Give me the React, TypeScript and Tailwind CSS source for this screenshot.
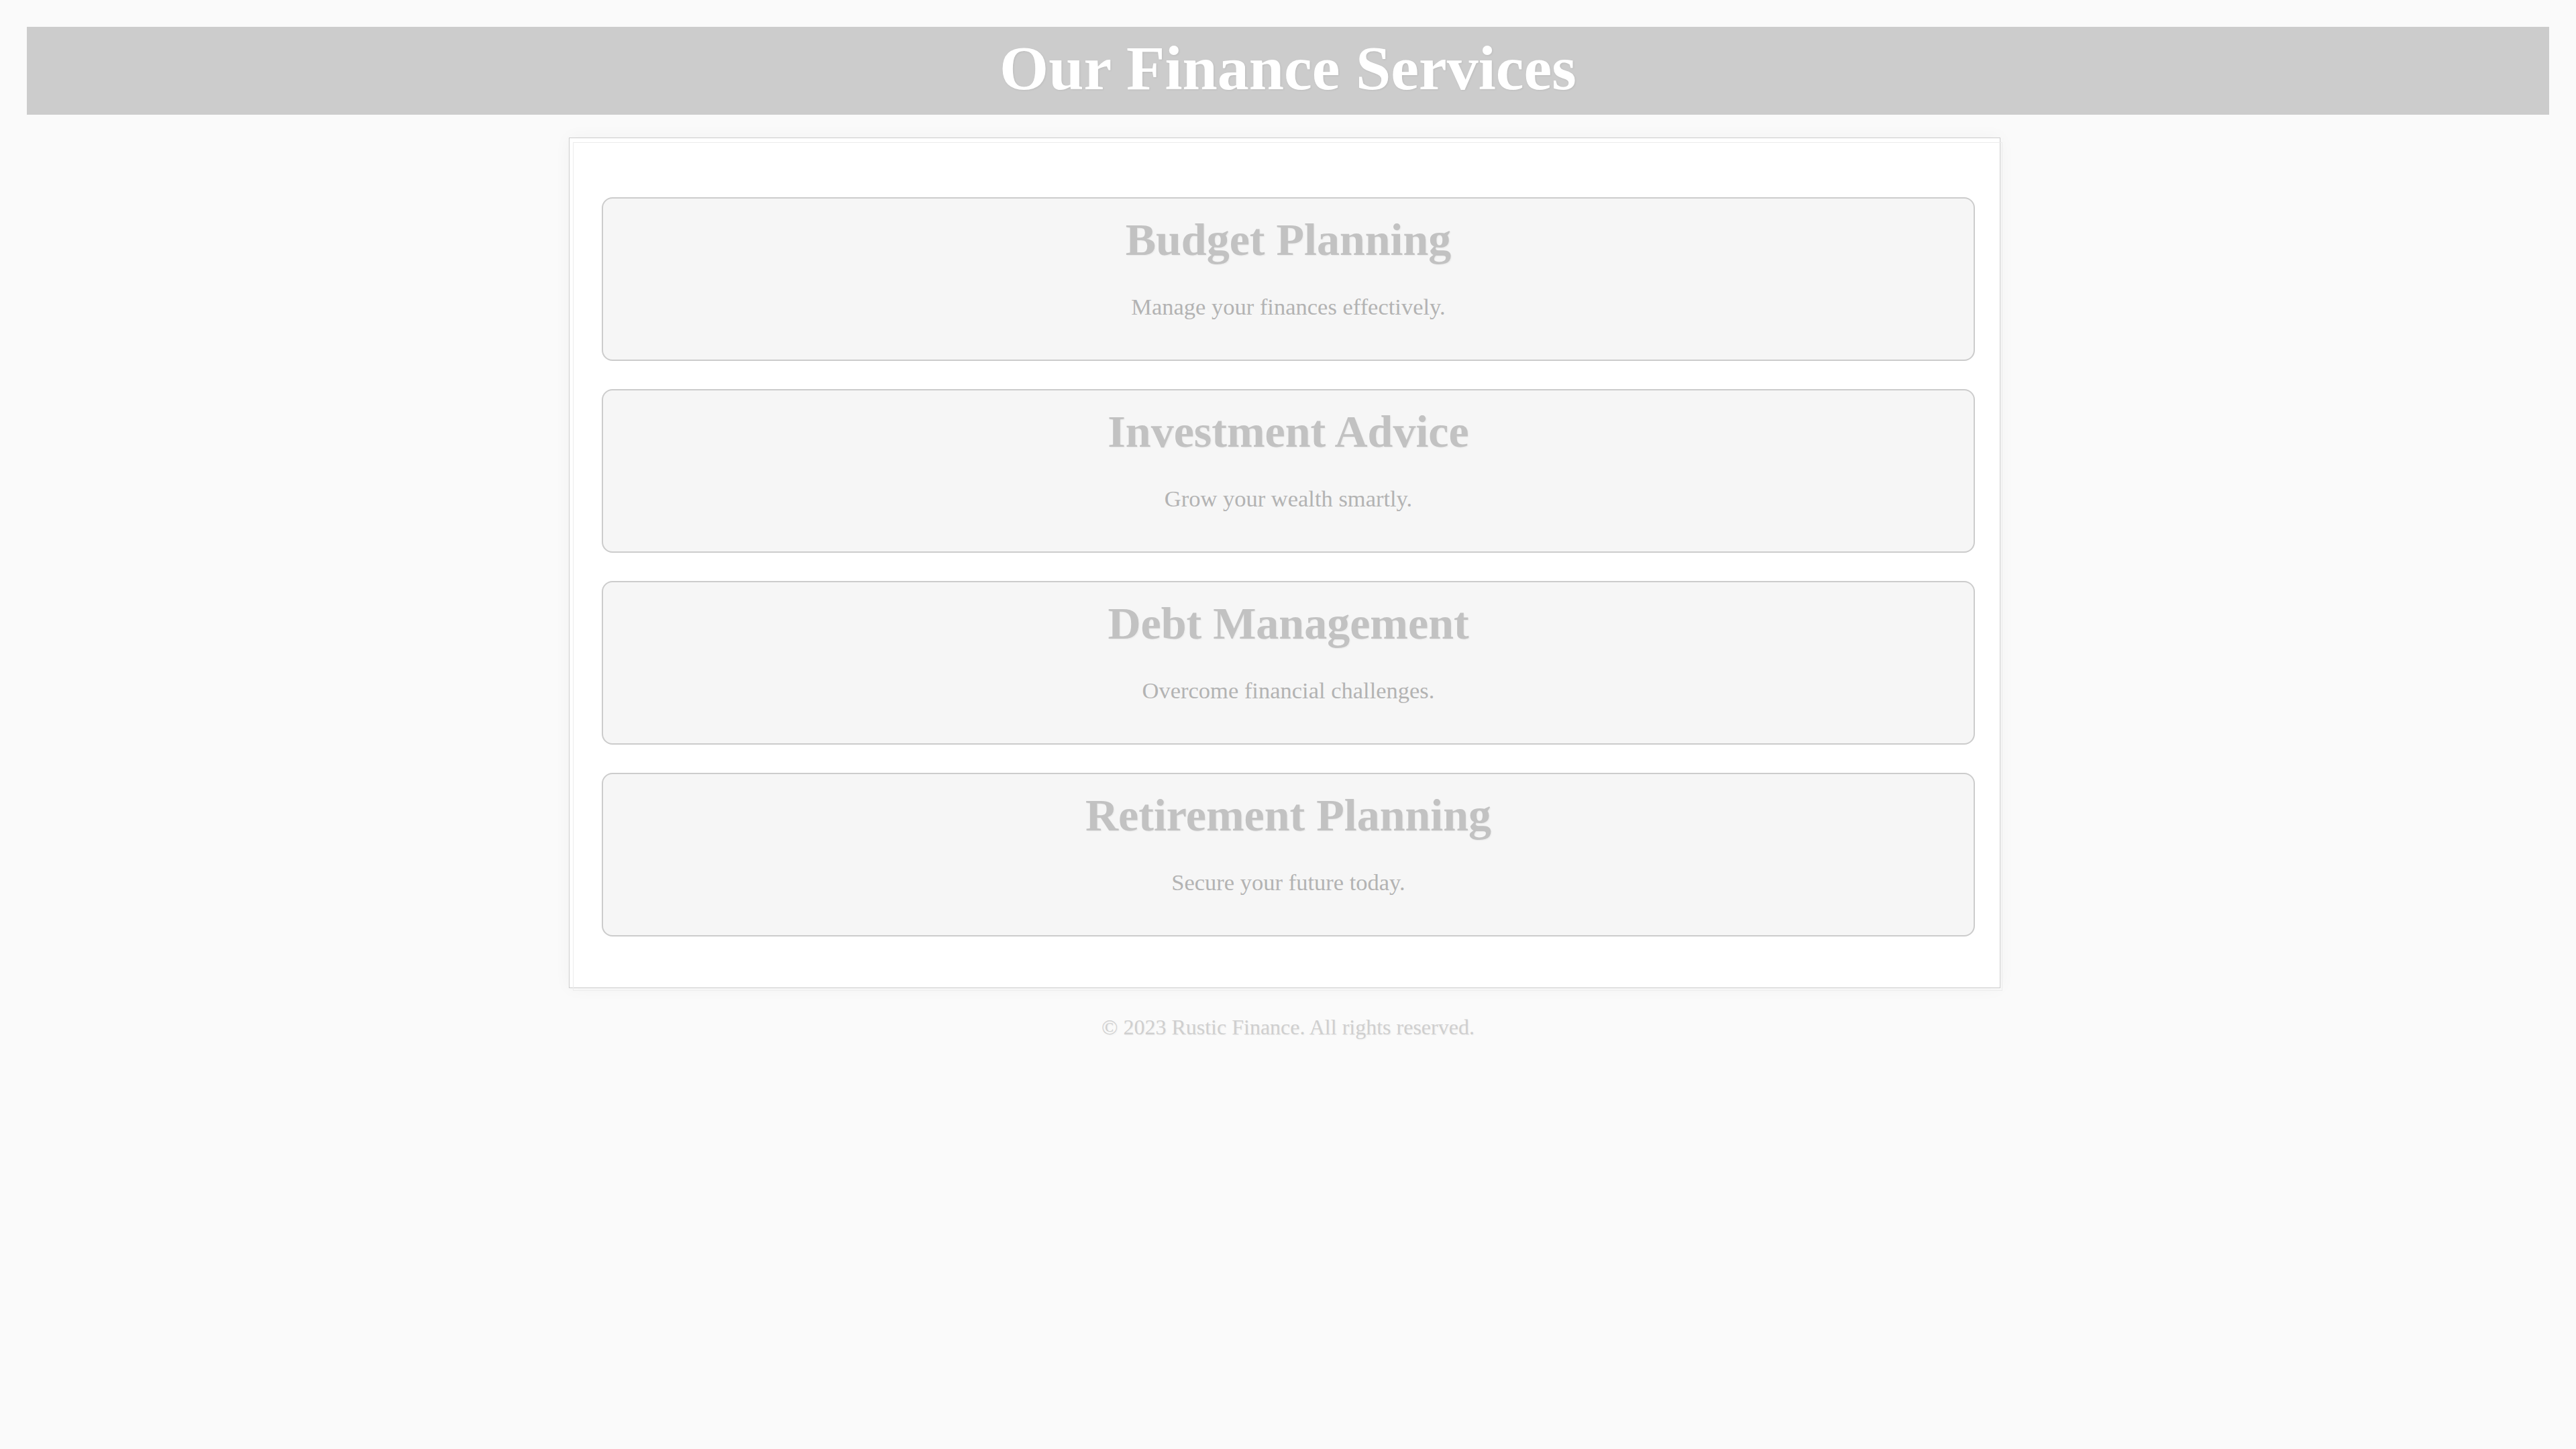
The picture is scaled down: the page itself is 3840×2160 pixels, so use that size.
const services = [
  { title: 'Budget Planning', blurb: 'Manage your finances effectively.' },
  { title: 'Investment Advice', blurb: 'Grow your wealth smartly.' },
  { title: 'Debt Management', blurb: 'Overcome financial challenges.' },
  { title: 'Retirement Planning', blurb: 'Secure your future today.' },
]

function ServiceCard({ title, blurb }: { title: string; blurb: string }) {
  return (
    <div className="rounded-[16px] border-2 border-[#cccccc] bg-[#f6f6f6] pt-[22px] pb-[59px] text-center">
      <h2 className="text-[68px] font-bold leading-[78px] text-[#c2c2c2] [text-shadow:1px_1px_2px_rgba(0,0,0,0.06)]">
        {title}
      </h2>
      <p className="mt-[42px] text-[34.5px] leading-[39px] text-[#b3b3b3]">{blurb}</p>
    </div>
  )
}

export default function App() {
  return (
    <div className="min-h-screen bg-[#fafafa] p-[40px] font-['Liberation_Serif',serif]">
      <header className="bg-[#cccccc] pt-[7px] pb-[16px] text-center">
        <h1 className="text-[94px] font-bold leading-[108px] text-white [text-shadow:1px_1px_3px_rgba(0,0,0,0.08)]">
          Our Finance Services
        </h1>
      </header>

      <main className="relative ml-[808px] mt-[34px] w-[2134px] border border-[#cccccc] bg-white pt-[88px] pb-[76px] pl-[48px] pr-[37px] shadow-[0_0_24px_rgba(0,0,0,0.04)]">
        {/* offset frame line */}
        <div className="pointer-events-none absolute top-[6px] left-[5px] -right-[4px] -bottom-[5px] border border-[#ececec]" />
        <div className="relative flex flex-col gap-[42px]">
          {services.map((s) => (
            <ServiceCard key={s.title} title={s.title} blurb={s.blurb} />
          ))}
        </div>
      </main>

      <footer className="mt-[40px] text-center text-[32px] leading-[37px] text-[#cfcfcf] [text-shadow:1px_1px_2px_rgba(0,0,0,0.06)]">
        © 2023 Rustic Finance. All rights reserved.
      </footer>
    </div>
  )
}
